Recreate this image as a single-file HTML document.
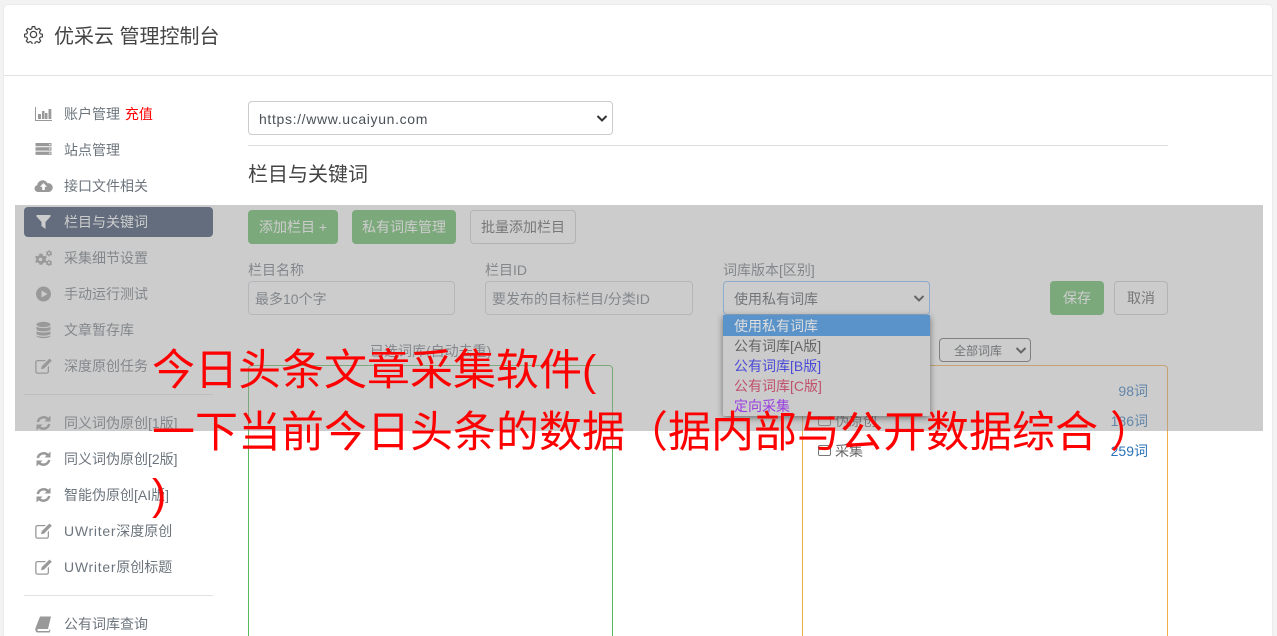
<!DOCTYPE html>
<html lang="zh"><head><meta charset="utf-8"><title>优采云 管理控制台</title>
<style>
*{box-sizing:border-box}
html{margin:0;padding:0;width:1277px;height:636px;overflow:hidden}
body{margin:0;padding:0;width:1277px;height:636px;overflow:hidden;position:relative;background:#f3f3f3;font-family:"Liberation Sans","Noto Sans CJK SC",sans-serif;font-size:14px;color:#555}
.a{position:absolute;white-space:nowrap}
.card{position:absolute;left:4px;top:5px;width:1268px;height:631px;background:#fff;border-radius:4px 4px 0 0;box-shadow:0 0 2px #ddd}
.nav{position:absolute;left:64px;white-space:nowrap;color:#6c757d;line-height:20px;font-size:14px}
.nav b{font-weight:normal;letter-spacing:.72px}
.ic{position:absolute;left:34px;width:19px;height:18px;fill:#999}
.hr{position:absolute;background:#e2e2e2;height:1px}
.btn{position:absolute;border-radius:4px;text-align:center;font-size:14px;line-height:34px;height:34px;white-space:nowrap}
.g{background:#5cb85c;color:#fff}
.o{border:1px solid #ccc;color:#555;line-height:33px}
.in{position:absolute;height:34px;border:1px solid #ced4da;border-radius:4px;color:#6c757d;font-size:14px;line-height:34px;padding-left:10px;white-space:nowrap;overflow:hidden}
.lb{position:absolute;color:#6c757d;font-size:14px;line-height:20px;white-space:nowrap}
.ct{position:absolute;right:129px;color:#2b72b8;font-size:14px;line-height:20px}
.ov{position:absolute;left:15px;top:205px;width:1248px;height:226px;background:rgba(153,153,153,.5)}
.dd{position:absolute;left:723px;top:315px;width:207px;height:101px;background:#cbcbcb;box-shadow:0 2px 7px rgba(0,0,0,.45);font-size:14px;line-height:20px;overflow:hidden;border-radius:0 0 2px 2px}
.dd div{height:20px;padding-left:11px;white-space:nowrap}
.red{position:absolute;left:152px;top:340px;width:1100px;white-space:nowrap;color:#f00;font-size:43px;line-height:62px;font-family:"Liberation Sans","WenQuanYi Zen Hei","Noto Sans CJK SC",sans-serif}
</style></head><body>
<div class="card"></div>
<div class="hr" style="left:4px;top:75px;width:1268px"></div>

<svg class="a" style="left:24px;top:25px" width="19" height="19" viewBox="0 0 24 24" fill="none" stroke="#444" stroke-width="1.6" stroke-linejoin="round"><circle cx="12" cy="12" r="4"/><path d="M10.300 1.500h3.400l.6 3 2.300 1 2.600-1.700 2.400 2.400-1.700 2.600 1 2.300 3 .6v3.400l-3 .6-1 2.300 1.700 2.600-2.400 2.400-2.600-1.700-2.300 1-.6 3h-3.400l-.6-3-2.300-1-2.600 1.700-2.400-2.400 1.700-2.600-1-2.300-3-.6v-3.400l3-.6 1-2.300-1.700-2.600 2.400-2.400 2.600 1.700 2.300-1z" transform="translate(.6 .6) scale(.95)"/></svg>
<div class="a" style="left:54px;top:23px;font-size:20px;line-height:28px;color:#444">优采云 管理控制台</div>

<svg class="ic" style="top:105px" viewBox="0 0 19 18"><path d="M1 2h1v13h16v1H1z"/><rect x="4" y="9" width="3" height="5"/><rect x="8" y="6" width="2.500" height="8"/><rect x="11" y="8" width="2.500" height="6"/><rect x="14.500" y="4" width="2.800" height="10"/></svg>
<div class="nav" style="top:104px">账户管理 <span style="color:#f00;margin-left:1px">充值</span></div>
<svg class="ic" style="top:141px" viewBox="0 0 19 18"><path d="M1.500 2h16v3.300h-16zM1.500 6.300h16v3.300h-16zM1.500 10.600h16v3.300h-16z"/><circle cx="15.800" cy="3.600" r=".7" fill="#fff"/><circle cx="15.800" cy="8" r=".7" fill="#fff"/><circle cx="15.800" cy="12.200" r=".7" fill="#fff"/></svg>
<div class="nav" style="top:140px">站点管理</div>
<svg class="ic" style="top:177px" viewBox="0 0 19 18"><path d="M4 15a3.500 3.500 0 0 1-.8-6.900A5.500 5.500 0 0 1 13.500 6.200 4.400 4.400 0 0 1 15 15z"/><path d="M9.500 6l3.500 3.700h-2.200V13H8.200V9.700H6z" fill="#fff"/></svg>
<div class="nav" style="top:176px">接口文件相关</div>

<div class="a" style="left:24px;top:207px;width:189px;height:30px;background:#2c4060;border-radius:4px"></div>
<svg class="ic" style="top:213px;fill:#fff" viewBox="0 0 19 18"><path d="M2.500 2h14v1.500L11.500 9v7l-4-3V9L2.500 3.500z"/></svg>
<div class="nav" style="top:212px;color:#fff">栏目与关键词</div>
<svg class="ic" style="top:249px" viewBox="0 0 19 18"><path d="M7 4.500l1.500.4.400 1.600 1.500.8 1.500-.5 1 1.600-1.100 1.100v1.700l1.100 1.100-1 1.600-1.500-.5-1.500.8-.4 1.600H5.500l-.4-1.600-1.500-.8-1.500.5-1-1.600 1.100-1.100V9.400L1.100 8.300l1-1.600 1.500.5 1.500-.8.400-1.600zM6.500 8.700a1.800 1.800 0 1 0 .001 0z" fill-rule="evenodd"/><path d="M14.500 1l1 .3.200.9.900.4.900-.3.600.9-.6.700v1l.6.700-.6.900-.9-.3-.9.400-.2.900h-1l-.2-.9-.9-.4-.9.300-.6-.9.600-.7v-1l-.6-.7.600-.9.900.3.900-.4zM15 3.200a1 1 0 1 0 .001 0zM14.500 10.500l1 .3.200.9.900.4.900-.3.600.9-.6.700v1l.6.700-.6.900-.9-.3-.9.400-.2.900h-1l-.2-.9-.9-.4-.9.300-.6-.9.600-.7v-1l-.6-.7.600-.9.900.3.900-.4zM15 12.700a1 1 0 1 0 .001 0z" fill-rule="evenodd"/></svg>
<div class="nav" style="top:248px">采集细节设置</div>
<svg class="ic" style="top:285px" viewBox="0 0 19 18"><path d="M9.500 1.500a7.500 7.500 0 1 0 .001 0zM7.500 5.500l6 3.500-6 3.500z" fill-rule="evenodd"/></svg>
<div class="nav" style="top:284px">手动运行测试</div>
<svg class="ic" style="top:321px" viewBox="0 0 19 18"><ellipse cx="9.500" cy="3.500" rx="7" ry="2.700"/><path d="M2.500 5.500c1 2 13 2 14 0v3c-1 2.500-13 2.500-14 0zM2.500 10c1 2 13 2 14 0v2.800c-1 2.500-13 2.500-14 0zM2.500 14.200c1 2 13 2 14 0V15c-1 2.800-13 2.800-14 0z"/></svg>
<div class="nav" style="top:320px">文章暂存库</div>
<svg class="ic" style="top:357px" viewBox="0 0 19 18"><path d="M3.500 3H12l-1.300 1.300H3.500a1 1 0 0 0-1 1v9.200a1 1 0 0 0 1 1h9.200a1 1 0 0 0 1-1V10L15 8.700v5.800a2.300 2.300 0 0 1-2.300 2.300H3.500a2.300 2.300 0 0 1-2.300-2.300V5.300A2.300 2.300 0 0 1 3.500 3z"/><path d="M15.500 1.500l2.300 2.300-7.800 7.800-3 .7.700-3z"/></svg>
<div class="nav" style="top:356px">深度原创任务</div>
<div class="hr" style="left:24px;top:394px;width:189px"></div>

<svg class="ic" style="top:414px" viewBox="0 0 19 18"><path d="M3.800 8a6 6 0 0 1 10-3M15.200 10a6 6 0 0 1-10 3" fill="none" stroke="#999" stroke-width="2.500"/><path d="M16.500 1.500v6h-6zM2.500 16.500v-6h6z"/></svg>
<div class="nav" style="top:413px">同义词伪原创[1版]</div>
<svg class="ic" style="top:450px" viewBox="0 0 19 18"><path d="M3.800 8a6 6 0 0 1 10-3M15.200 10a6 6 0 0 1-10 3" fill="none" stroke="#999" stroke-width="2.500"/><path d="M16.500 1.500v6h-6zM2.500 16.500v-6h6z"/></svg>
<div class="nav" style="top:449px">同义词伪原创[2版]</div>
<svg class="ic" style="top:486px" viewBox="0 0 19 18"><path d="M3.800 8a6 6 0 0 1 10-3M15.200 10a6 6 0 0 1-10 3" fill="none" stroke="#999" stroke-width="2.500"/><path d="M16.500 1.500v6h-6zM2.500 16.500v-6h6z"/></svg>
<div class="nav" style="top:485px">智能伪原创[AI版]</div>
<svg class="ic" style="top:522px" viewBox="0 0 19 18"><path d="M3.500 3H12l-1.300 1.300H3.500a1 1 0 0 0-1 1v9.200a1 1 0 0 0 1 1h9.200a1 1 0 0 0 1-1V10L15 8.700v5.800a2.300 2.300 0 0 1-2.300 2.300H3.500a2.300 2.300 0 0 1-2.300-2.300V5.300A2.300 2.300 0 0 1 3.500 3z"/><path d="M15.500 1.500l2.300 2.300-7.800 7.800-3 .7.700-3z"/></svg>
<div class="nav" style="top:521px"><b>UWriter</b>深度原创</div>
<svg class="ic" style="top:558px" viewBox="0 0 19 18"><path d="M3.500 3H12l-1.300 1.300H3.500a1 1 0 0 0-1 1v9.200a1 1 0 0 0 1 1h9.200a1 1 0 0 0 1-1V10L15 8.700v5.800a2.300 2.300 0 0 1-2.300 2.300H3.500a2.300 2.300 0 0 1-2.300-2.300V5.300A2.300 2.300 0 0 1 3.500 3z"/><path d="M15.500 1.500l2.300 2.300-7.800 7.800-3 .7.700-3z"/></svg>
<div class="nav" style="top:557px"><b>UWriter</b>原创标题</div>
<div class="hr" style="left:24px;top:595px;width:189px"></div>
<svg class="ic" style="top:615px" viewBox="0 0 19 18"><path d="M6 1.500h11l-3 12.500H4.500c-1.500 0-1.500 2 0 2H15l.5-1.500 1 .5-.8 2.500H4c-2.500 0-3-2.500-2.500-4.500z"/></svg>
<div class="nav" style="top:614px">公有词库查询</div>

<div class="in" style="left:248px;top:101px;width:365px;color:#495057;border-color:#ccc;letter-spacing:.65px">https://www.ucaiyun.com</div>
<svg class="a" style="left:596px;top:114px" width="12" height="9" viewBox="0 0 12 9" fill="none" stroke="#333" stroke-width="2"><path d="M1.500 2l4.500 4.500L10.500 2"/></svg>
<div class="hr" style="left:248px;top:145px;width:920px;background:#dedede"></div>
<div class="a" style="left:248px;top:161px;font-size:20px;line-height:28px;color:#444">栏目与关键词</div>

<div class="btn g" style="left:248px;top:210px;width:90px">添加栏目 +</div>
<div class="btn g" style="left:352px;top:210px;width:104px">私有词库管理</div>
<div class="btn o" style="left:470px;top:210px;width:106px">批量添加栏目</div>

<div class="lb" style="left:248px;top:260px">栏目名称</div>
<div class="in" style="left:248px;top:281px;width:207px;padding-left:6px">最多10个字</div>
<div class="lb" style="left:485px;top:260px">栏目ID</div>
<div class="in" style="left:485px;top:281px;width:208px;padding-left:6px">要发布的目标栏目/分类ID</div>
<div class="lb" style="left:723px;top:260px">词库版本[区别]</div>
<div class="in" style="left:723px;top:281px;width:207px;border-color:#80bdff;color:#495057">使用私有词库</div>
<svg class="a" style="left:913px;top:294px" width="12" height="9" viewBox="0 0 12 9" fill="none" stroke="#333" stroke-width="2"><path d="M1.500 2l4.500 4.500L10.500 2"/></svg>
<div class="btn g" style="left:1050px;top:281px;width:54px">保存</div>
<div class="btn o" style="left:1114px;top:281px;width:54px">取消</div>

<div class="lb" style="left:370px;top:341px">已选词库(自动去重)</div>
<div class="a" style="left:248px;top:365px;width:365px;height:300px;border:1px solid #5cb85c;border-radius:4px"></div>
<div class="a" style="left:802px;top:365px;width:366px;height:300px;border:1px solid #f0ad4e;border-radius:4px"></div>
<div class="in" style="left:939px;top:338px;width:92px;height:24px;line-height:24px;font-size:12px;border-color:#666;padding-left:14px;color:#495057">全部词库</div>
<svg class="a" style="left:1015px;top:346px" width="12" height="9" viewBox="0 0 12 9" fill="none" stroke="#333" stroke-width="2"><path d="M1.500 2l4.500 4.500L10.500 2"/></svg>
<div class="ct" style="top:381px">98词</div>
<div class="a" style="left:818px;top:415px;width:13px;height:11px;border:1px solid #777;border-radius:2px"></div>
<div class="lb" style="left:835px;top:411px;color:#666">伪原创</div>
<div class="ct" style="top:411px">186词</div>
<div class="a" style="left:818px;top:445px;width:13px;height:11px;border:1px solid #777;border-radius:2px"></div>
<div class="lb" style="left:835px;top:441px;color:#666">采集</div>
<div class="ct" style="top:441px">259词</div>

<div class="ov"></div>
<div class="dd">
<div style="background:#5a93c9;color:#ddd;height:21px;line-height:22px">使用私有词库</div>
<div style="color:#666">公有词库[A版]</div>
<div style="color:#4a4ad8">公有词库[B版]</div>
<div style="color:#c0506a">公有词库[C版]</div>
<div style="color:#9a3fe0">定向采集</div>
</div>
<div class="red">今日头条文章采集软件(<br>一下当前今日头条的数据（据内部与公开数据综合 ）<br>)</div>
</body></html>
